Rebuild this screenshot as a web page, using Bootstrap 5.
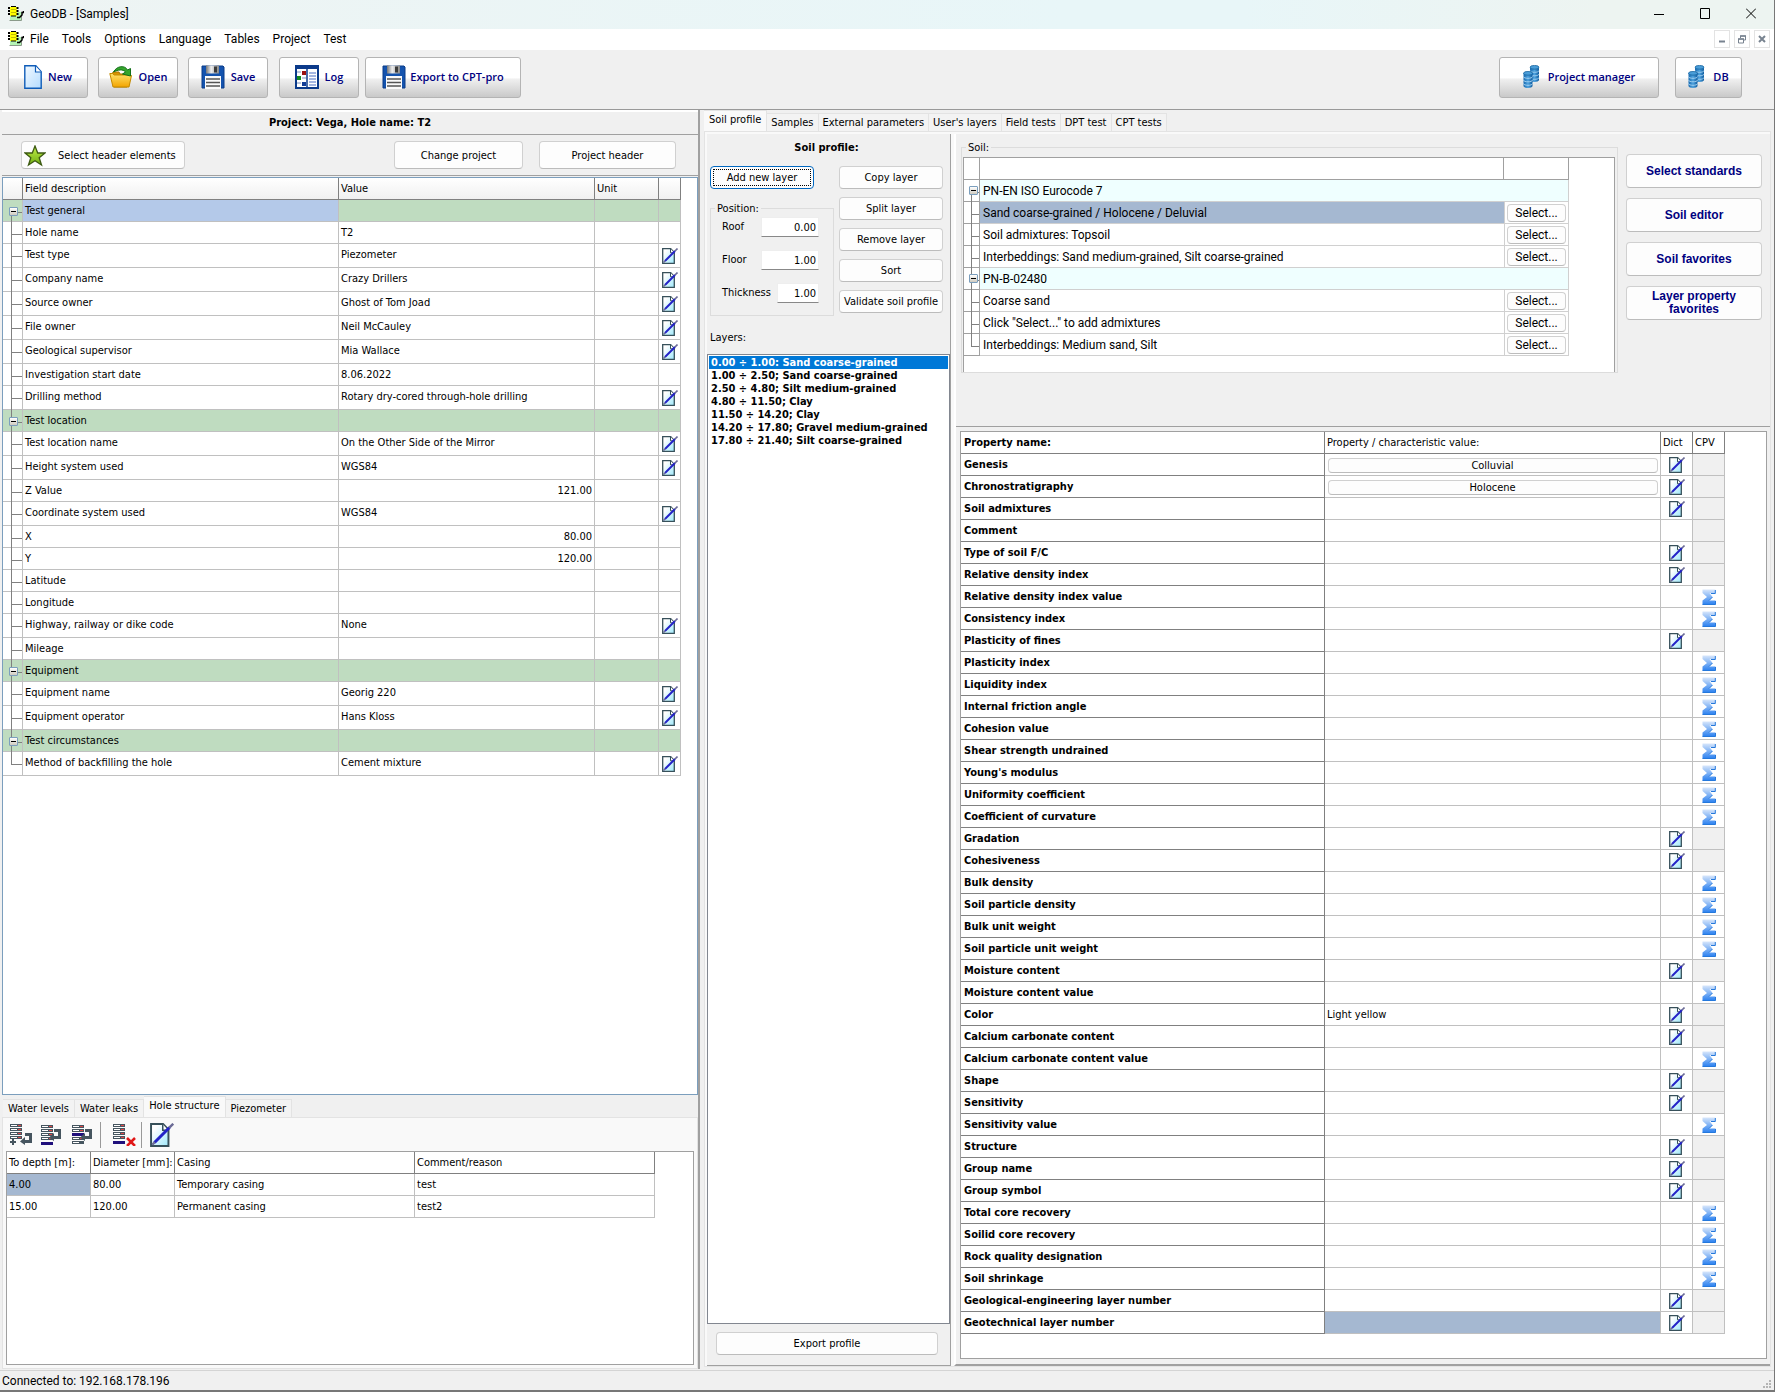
<!DOCTYPE html>
<html lang="en">
<head>
<meta charset="utf-8">
<meta name="viewport" content="width=device-width, initial-scale=1">
<title>GeoDB - [Samples]</title>
<link href="https://cdn.jsdelivr.net/npm/bootstrap@5.3.0/dist/css/bootstrap.min.css" rel="stylesheet">
<style>
:root{--tahoma:"DejaVu Sans Condensed","Liberation Sans",sans-serif;--segoe:Roboto,"Open Sans",sans-serif;--face:#f0f0f0;--sel:#a5b8d1}
body{font-family:var(--tahoma);font-size:11px;line-height:14px;color:#000;background:var(--face)}
.app-window{height:100vh;min-height:1392px;border-right:1px solid #777;border-bottom:2px solid #777}
.segoe{font-family:var(--segoe);font-size:12px;line-height:16px}
.title-strip{height:29px;padding:0 0 2px 8px;gap:6px;background:linear-gradient(90deg,#eef4f3,#e8f6f8 60%,#e8f6f8 70%,#edf4f1 90%)}
.win-btn{width:46px;height:27px;border:0;background:none;padding:0;display:flex;align-items:center;justify-content:center}
.menu-strip{height:20px;background:#fff;padding-left:8px;gap:6px}
.menu-links{gap:13px}
.menu-strip a{color:#000;text-decoration:none}
.mdi-btn{width:16px;height:18px;border:1px solid #e3e3e3;background:#fff;padding:0;display:flex;align-items:center;justify-content:center}
.tool-strip{height:61px;border-top:1px solid #fff;border-bottom:1px solid #999;padding:7px 32px 0 8px;gap:10px}
.log-tools{gap:6px;padding-left:1px}
.tool-btn{height:41px;width:80px;border:1px solid #b4b4b4;border-radius:3px;background:linear-gradient(#fff 50%,#efefef 55%,#c9c9c9);color:#000080;font:600 11px/16px "Open Sans","Noto Sans",sans-serif;display:flex;align-items:center;justify-content:center;gap:6px;padding:0 0 2px}
.btn-exp{width:156px;gap:4px}.btn-pm{width:160px;gap:8px}.btn-db{width:67px;gap:8px}
.plain-btn{border:1px solid #d0d0d0;border-bottom-color:#bcbcbc;border-radius:4px;background:#fdfdfd;color:#000;font:inherit;padding:0;height:23px}
.left-pane{width:700px;border-right:2px solid #a0a0a0;flex:none;padding-left:2px}
.project-name{height:25px;border-top:2px solid #fff;border-bottom:1px solid #a0a0a0;font-weight:700;text-align:center;line-height:22px}
.header-bar{height:41px;border-bottom:1px solid #a0a0a0;padding:6px 22px 0 19px}
.header-bar .plain-btn{height:28px;padding-top:1px}
.w-sel{width:164px;padding-left:2px!important;gap:12px}.w-chg{width:129px}.w-hdr{width:137px}
.fields-box{border:1px solid #7b9ebd;background:#fff;margin-top:1px}
.gridt{border-collapse:separate;border-spacing:0;table-layout:fixed;width:0}
.gridt th,.gridt td{height:22px;padding:4px 2px 2px;border-right:1px solid #c0c0c0;border-bottom:1px solid #c0c0c0;font-weight:400;line-height:14px;vertical-align:top;white-space:nowrap;overflow:hidden}
.gridt th{border-color:#808080}
.gridt tr.tall>td{height:24px}
.gridt .ico{padding:0;text-align:center;vertical-align:middle;line-height:0}
.fields th{background:linear-gradient(#fff,#f0f0f0)}
.grp td{background:#bfdcc0}
.grp td.picked{background:#b4c9e9}
.gridt td.tree{position:relative;padding:0;overflow:visible}
.tree::before{content:"";position:absolute;left:8px;top:0;bottom:-1px;border-left:1px solid #808080}
.tree::after{content:"";position:absolute;left:8px;right:0;top:12px;border-top:1px solid #808080}
.tree.t-first::before{top:12px}
.tree.t-last::before{bottom:auto;height:12px}
.tree button{position:absolute;z-index:1;left:6px;top:7px;width:9px;height:9px;border:1px solid #7b9ebd;border-radius:1px;background:linear-gradient(#fff,#cfcabf);padding:0}
.tree button::after{content:"";position:absolute;left:1px;right:1px;top:3px;border-top:1px solid #000}
.icon-btn{border:0;background:none;padding:0;line-height:0;vertical-align:middle}
.tab-strip{display:flex;align-items:flex-end;padding-left:1px}
.tab-strip button{height:18px;border:1px solid #e3e3e3;border-left-width:0;border-bottom:0;background:#f3f3f3;color:#000;font:inherit;padding:0 4px;white-space:nowrap}
.tab-strip button.on{height:21px;background:#f9f9f9;padding:0 5px 3px}
.low-tabs{padding-top:1px}
.low-tabs button{padding:1px 5px 0}
.low-tabs button.on{padding:0 5px 2px}
.tab-page{border:1px solid #e3e3e3;background:#f9f9f9}
.low-page{padding:0 3px 3px}
.row-tools{height:33px;padding-left:4px}
.casing-box{height:214px}
.sep-v{width:1px;height:26px;background:#999}
.ring-box{border:1px solid #a0a0a0;background:#fff}
.sel-cell{background:var(--sel)}
.right-pane{min-width:0;padding:0 3px 2px 4px}
.main-page{padding:2px 0 0 2px}
.profile-col{width:244px;flex:none;background:var(--face);border-right:1px solid #a0a0a0;border-bottom:1px solid #a0a0a0}
.profile-top{height:220px;padding:7px 7px 0 3px}
.profile-tools{padding-top:11px}
.btn-stack{gap:8px}
.btn-104{width:104px}
.focused{border-color:#0067c0;outline:1px dotted #000;outline-offset:-4px}
.boxed{border:1px solid #dcdcdc;position:relative}
.boxed>legend{position:absolute;top:-8px;left:4px;width:auto;float:none;margin:0;padding:0 2px;font-family:var(--tahoma);font-size:11px;line-height:14px;background:var(--face)}
.pos-box{width:124px;height:108px;margin-top:19px;padding:8px 14px 0 11px}
.pos-box>legend{top:-7px}
.pos-box>div{height:33px}
.pos-box label{padding-top:3px}
.num-in{width:58px;height:20px;border:1px solid #eee;border-bottom:1px solid #888;background:#fff;font:inherit;text-align:right;padding:0 2px}
.num-short{width:42px}
.list-title{padding-top:15px}
.layer-list{list-style:none;margin:0;padding:1px;border:1px solid #828790;background:#fff;font-weight:700;line-height:13px}
.layer-list li{padding-left:2px;height:13px;white-space:nowrap}
.layer-list li.on{background:#0078d7;color:#fff}
.export-row{padding:8px 12px 10px 9px}
.detail-col{min-width:0;background:var(--face);border-left:2px solid #fff;margin-left:3px;border-bottom:2px solid #a0a0a0}
.soil-zone{height:293px;border-bottom:1px solid #a0a0a0;padding:13px 8px 0 5px}
.soil-box{height:226px;padding:9px 2px 0 1px}
.soil-box>legend{top:-7px}
.soil-grid{height:215px;border:1px solid #a0a0a0;border-bottom:0;background:#fff}
.soil-grid .gridt th,.soil-grid .gridt td{line-height:16px;border-color:#d0d0d0;padding:3px 3px 2px}
.soil-grid .gridt .tree,.soil-grid .gridt th{border-color:#a0a0a0}
.soil-grid .gridt .tree{padding:0}
.soil-grid .gridt td.pick{padding:2px 2px 1px;border-left:1px solid #d0d0d0}
.soil-grid .plain-btn{height:18px;width:100%;line-height:14px;display:block}
.soil-grid .tree button{left:5px;top:6px}
.soil-grid .tree::before,.soil-grid .tree::after{left:7px}
.aqua td:not(.tree){background:#efffff}
.side-stack{gap:10px;padding-top:7px}
.side-btn{font:700 12px/13px "Liberation Sans",Arial,sans-serif;color:#000080;width:136px;height:34px}
.prop-box{margin:4px 3px 5px 4px}
.props .pname{font-weight:700;border-color:#808080;padding-left:3px}
.props .off{background:#f0f0f0}
.props .plain-btn{display:block;width:330px;height:15px;line-height:13px;margin:0 auto}
.status-strip{height:20px;border-top:1px solid #d4d4d4;padding:1px 2px;margin-top:1px}
</style>
</head>
<body>
<svg width="0" height="0" class="position-absolute" aria-hidden="true">
<defs>
<linearGradient id="gp" x1="0" y1="0" x2="1" y2="1"><stop offset=".2" stop-color="#fff"/><stop offset="1" stop-color="#9fe8fb"/></linearGradient>
<linearGradient id="gs" x1="0" y1="0" x2="0" y2="1"><stop offset="0" stop-color="#d7e6fb"/><stop offset="1" stop-color="#2a80f0"/></linearGradient>
<linearGradient id="gn" x1="0" y1="0" x2="1" y2="1"><stop offset="0" stop-color="#f2f9ff"/><stop offset="1" stop-color="#b4dcff"/></linearGradient>
<linearGradient id="gf" x1="0" y1="0" x2="0" y2="1"><stop offset="0" stop-color="#ffe36b"/><stop offset="1" stop-color="#f3a400"/></linearGradient>
<linearGradient id="gm" x1="0" y1="0" x2="1" y2="0"><stop offset="0" stop-color="#777"/><stop offset=".4" stop-color="#eee"/><stop offset="1" stop-color="#888"/></linearGradient>
<linearGradient id="gd" x1="0" y1="0" x2="1" y2="0"><stop offset="0" stop-color="#1668ae"/><stop offset=".5" stop-color="#4ea2de"/><stop offset="1" stop-color="#0f5c9f"/></linearGradient>
<linearGradient id="gg" x1="0" y1="0" x2="0" y2="1"><stop offset="0" stop-color="#c4f04a"/><stop offset="1" stop-color="#6fae12"/></linearGradient>
<symbol id="edit" viewBox="0 0 16 16"><path d="M.7.7h8l3.600 3.800v10.800H.7z" fill="url(#gp)" stroke="#37505a" stroke-width="1.300"/><path d="M8.500.8v4h3.600" fill="#fff" stroke="#37505a"/><path d="M3 13 13 3" stroke="#2322c8" stroke-width="2"/><path d="M1.500 14.500 3.200 12.800M12.700 3.300 15.500.5" stroke="#6b6b96" stroke-width="1.600"/></symbol>
<symbol id="sum" viewBox="0 0 14 16"><path d="M.5.5h12.800v4h-3.800L7.500 4l3 4-3.500 3.600h6.500v4H.5v-4L5 8 .5 4z" fill="url(#gs)"/><path d="M13.300 1v3.500H9M10.500 8 7 11.600M13.500 12v3.500H.5" stroke="#2478dc" fill="none"/></symbol>
<symbol id="app" viewBox="0 0 16 16"><path d="M2 6h11v9H2z" fill="#b4f4b4"/><path d="M1.500 14.500h12V10" stroke="#8a9a8a" fill="none"/><path d="M2 1h7v9H2z" fill="#ff0"/><path d="M3 .5h5M3 10h5" stroke="#000" stroke-width="1"/><path d="M1 1v9M9.500 1v9" stroke="#000" stroke-dasharray="2 1" stroke-width="2"/><path d="M3 3.500h5M3 6.500h5" stroke="#a8a000" stroke-width=".7"/><path d="M9 11.500h2.500L14 9V6.500h1.500V5" stroke="#000" stroke-width="1.500" fill="none"/></symbol>
<symbol id="page" viewBox="0 0 18 24"><path d="M.8.8h11l5.400 6v16.400H.8z" fill="url(#gn)" stroke="#0f5cb8" stroke-width="1.400"/><path d="M11.500 1v6h5.500" fill="#fff" stroke="#0f5cb8" stroke-width="1.200"/></symbol>
<symbol id="folder" viewBox="0 0 24 22"><path d="m3 9 1-3h6l1 2h9v10l-2 3H5z" fill="#d89400" stroke="#a87400"/><path d="M.8 7.500h3L5 9h15l2.500.5L20 21H4z" fill="url(#gf)" stroke="#c48a00"/><path d="M4.500 6C8-.5 16-1 18.500 4L21.500 2.500v7.500l-8-2 3-2C14 3 9 3.500 4.500 6z" fill="#35a62c" stroke="#13701a"/></symbol>
<symbol id="disk" viewBox="0 0 24 24"><path d="M1 1h21l1 1v21H1z" fill="#1453ae" stroke="#0b3c88"/><path d="M5 .5h13v8H5z" fill="url(#gm)"/><path d="M13 1.500h3v6h-3z" fill="#3b3b3b"/><path d="M4 11h16v13H4z" fill="#fafafa"/><path d="M5 14h14M5 17.500h14M5 21h14" stroke="#555" stroke-width="1.500"/></symbol>
<symbol id="logi" viewBox="0 0 24 24"><path d="M1 1h22v22H1z" fill="#fff" stroke="#0b3a8a" stroke-width="2"/><path d="M1 0h22v4H1z" fill="#0b3a8a"/><path d="M12 4v19" stroke="#0b3a8a" stroke-width="1.500"/><path d="M14 8h7M14 11h7M14 14h7M14 17h7M14 20h7" stroke="#4a6fc4"/><path d="M7 6h4v4H7z" fill="#9c1010"/><path d="M2 11h4v4H2z" fill="#128a20"/><path d="M7 17h4v4H7z" fill="#123c96"/><path d="M2 7h4M7 13h4M2 18h4" stroke="#bcc8dd" stroke-width="2"/></symbol>
<symbol id="cyl" viewBox="0 0 10 17"><path d="M.5 2v13c0 2.500 9 2.500 9 0V2z" fill="url(#gd)"/><ellipse cx="5" cy="2.300" rx="4.500" ry="1.900" fill="#4a9dd8" stroke="#15639f" stroke-width=".8"/><path d="M.5 5.500c0 2.400 9 2.400 9 0M.5 9c0 2.400 9 2.400 9 0M.5 12.500c0 2.400 9 2.400 9 0" stroke="#a9d5f3" fill="none" stroke-width=".9"/></symbol>
<symbol id="db" viewBox="0 0 17 24"><use href="#cyl" x="6.500" width="10" height="17"/><use href="#cyl" y="6" width="10" height="17"/></symbol>
<symbol id="rows" viewBox="0 0 12 15"><path d="M0 1.500h12M0 5.500h12M0 9.500h12M0 13.500h12" stroke="#46555f" stroke-width="3"/><path d="M1 1.500h6M1 5.500h6M1 9.500h6M1 13.500h6" stroke="#fff"/><path d="M8 1.500h3M8 5.500h3M8 9.500h3M8 13.500h3" stroke="#e04848"/></symbol>
<symbol id="arr" viewBox="0 0 12 12"><path d="M5 1.500h5.500v7H4" fill="none" stroke="#46555f" stroke-width="3"/><path d="M5 4v8L0 8.500z" fill="#46555f"/></symbol>
</defs></svg>

<div class="app-window d-flex flex-column">
  <header>
    <div class="title-strip d-flex align-items-center segoe">
      <svg width="16" height="16"><use href="#app"/></svg><span class="me-auto">GeoDB - [Samples]</span>
      <div class="d-flex">
      <button class="win-btn" aria-label="Minimize"><svg width="10" height="10"><path d="M0 5.500h10" stroke="#000"/></svg></button>
      <button class="win-btn" aria-label="Maximize"><svg width="10" height="11"><path d="M.5.5h9v10h-9z" fill="none" stroke="#000"/></svg></button>
      <button class="win-btn" aria-label="Close"><svg width="10" height="11"><path d="m0 .5 10 10m0-10-10 10" stroke="#000"/></svg></button>
      </div>
    </div>
    <nav class="menu-strip d-flex align-items-center segoe">
      <svg width="16" height="16"><use href="#app"/></svg>
      <div class="d-flex me-auto menu-links"><a href="#">File</a><a href="#">Tools</a><a href="#">Options</a><a href="#">Language</a><a href="#">Tables</a><a href="#">Project</a><a href="#">Test</a></div>
      <div class="d-flex gap-1 pe-1">
      <button class="mdi-btn" aria-label="Minimize child"><svg width="8" height="8"><path d="M1 6.500h6" stroke="#788390" stroke-width="2"/></svg></button>
      <button class="mdi-btn" aria-label="Restore child"><svg width="8" height="9"><path d="M2.500 3V1h5v4H6M.5 4h5v4h-5z" fill="none" stroke="#788390"/><path d="M2 1h6M0 4h6" stroke="#788390" stroke-width="1.500"/></svg></button>
      <button class="mdi-btn" aria-label="Close child"><svg width="8" height="8"><path d="m1 1 6 6m0-6-6 6" stroke="#788390" stroke-width="2"/></svg></button>
      </div>
    </nav>
    <div class="tool-strip d-flex">
      <button class="tool-btn"><svg width="18" height="24"><use href="#page"/></svg>New</button>
      <button class="tool-btn"><svg width="24" height="22"><use href="#folder"/></svg>Open</button>
      <button class="tool-btn"><svg width="24" height="24"><use href="#disk"/></svg>Save</button>
      <div class="d-flex log-tools"><button class="tool-btn"><svg width="24" height="24"><use href="#logi"/></svg>Log</button>
      <button class="tool-btn btn-exp"><svg width="24" height="24"><use href="#disk"/></svg>Export to CPT-pro</button></div>
      <div class="d-flex gap-3 ms-auto"><button class="tool-btn btn-pm"><svg width="17" height="24"><use href="#db"/></svg>Project manager</button>
      <button class="tool-btn btn-db"><svg width="17" height="24"><use href="#db"/></svg>DB</button></div>
    </div>
  </header>

  <main class="d-flex flex-grow-1">
    <section class="left-pane d-flex flex-column">
      <div class="project-name">Project: Vega, Hole name: T2</div>
      <div class="header-bar d-flex align-items-start">
        <button class="plain-btn w-sel d-flex align-items-center me-auto"><svg width="22" height="22" viewBox="0 0 22 22"><path d="m11 1 2.700 7H21l-5.800 4.800L17.500 20 11 15.700 4.500 20l2.300-7.200L1 8h7.300z" fill="url(#gg)" stroke="#3d5a12" stroke-width="1.300"/></svg>Select header elements</button>
        <button class="plain-btn w-chg me-3">Change project</button>
        <button class="plain-btn w-hdr">Project header</button>
      </div>
      <div class="fields-box flex-grow-1">
        <table class="gridt fields"><colgroup><col style="width:20px"><col style="width:316px"><col style="width:256px"><col style="width:64px"><col style="width:22px"></colgroup>
          <thead><tr><th></th><th>Field description</th><th>Value</th><th>Unit</th><th></th></tr></thead><tbody id="fields"></tbody></table>
      </div>
      <div class="tab-strip low-tabs"><button>Water levels</button><button>Water leaks</button><button class="on">Hole structure</button><button>Piezometer</button></div>
      <div class="tab-page low-page">
        <div class="d-flex align-items-center row-tools">
          <button class="icon-btn" aria-label="Append row"><svg width="22" height="22"><use href="#rows" width="12" height="15"/><path d="M0 18h6M3 15v6" stroke="#46555f" stroke-width="2"/><use href="#arr" x="10" y="9" width="12" height="12"/></svg></button>
          <button class="icon-btn ms-2" aria-label="Insert row below"><svg width="22" height="22"><use href="#rows" y="1" x="1" width="12" height="15"/><path d="M1 19.500h12" stroke="#20107c" stroke-width="3"/><use href="#arr" x="9" y="5" width="12" height="12"/></svg></button>
          <button class="icon-btn ms-2" aria-label="Insert row above"><svg width="22" height="22"><use href="#rows" y="1" x="2" width="12" height="15"/><path d="M2 10.500h12" stroke="#20107c" stroke-width="3"/><path d="M2 18.500h12" stroke="#46555f" stroke-width="3"/><path d="M3 18.500h6" stroke="#fff"/><use href="#arr" x="10" y="5" width="12" height="12"/></svg></button>
          <span class="sep-v ms-2 me-2"></span>
          <button class="icon-btn ps-1" aria-label="Delete row"><svg width="24" height="22"><use href="#rows" width="12" height="15"/><path d="M0 18.500h12" stroke="#20107c" stroke-width="3"/><path d="m14 14 8 8m0-8-8 8" stroke="#e01818" stroke-width="2.500"/></svg></button>
          <span class="sep-v ms-1 me-2"></span>
          <button class="icon-btn" aria-label="Edit"><svg width="24" height="24"><use href="#edit"/></svg></button>
        </div>
        <div class="ring-box casing-box">
          <table class="gridt"><colgroup><col style="width:84px"><col style="width:84px"><col style="width:240px"><col style="width:240px"></colgroup>
            <thead><tr><th>To depth [m]:</th><th>Diameter [mm]:</th><th>Casing</th><th>Comment/reason</th></tr></thead>
            <tbody><tr><td class="sel-cell">4.00</td><td>80.00</td><td>Temporary casing</td><td>test</td></tr><tr><td>15.00</td><td>120.00</td><td>Permanent casing</td><td>test2</td></tr></tbody></table>
        </div>
      </div>
    </section>

    <section class="right-pane d-flex flex-column flex-grow-1">
      <div class="tab-strip p-0"><button class="on">Soil profile</button><button>Samples</button><button>External parameters</button><button>User's layers</button><button>Field tests</button><button>DPT test</button><button>CPT tests</button></div>
      <div class="tab-page main-page d-flex flex-grow-1">
        <div class="profile-col d-flex flex-column">
          <div class="profile-top">
            <div class="text-center fw-bold">Soil profile:</div>
            <div class="d-flex justify-content-between profile-tools">
              <div>
                <button class="plain-btn btn-104 focused d-block">Add new layer</button>
                <fieldset class="boxed pos-box"><legend>Position:</legend>
                  <div class="d-flex justify-content-between align-items-start"><label for="roof">Roof</label><input class="num-in" id="roof" value="0.00"></div>
                  <div class="d-flex justify-content-between align-items-start"><label for="floor">Floor</label><input class="num-in" id="floor" value="1.00"></div>
                  <div class="d-flex justify-content-between align-items-start"><label for="thick">Thickness</label><input class="num-in num-short" id="thick" value="1.00"></div>
                </fieldset>
                <div id="lay" class="list-title">Layers:</div>
              </div>
              <div class="d-flex flex-column btn-stack"><button class="plain-btn btn-104">Copy layer</button><button class="plain-btn btn-104">Split layer</button><button class="plain-btn btn-104">Remove layer</button><button class="plain-btn btn-104">Sort</button><button class="plain-btn btn-104">Validate soil profile</button></div>
            </div>
          </div>
          <ul class="layer-list flex-grow-1" aria-labelledby="lay"><li class="on">0.00 ÷ 1.00: Sand coarse-grained</li><li>1.00 ÷ 2.50; Sand coarse-grained</li><li>2.50 ÷ 4.80; Silt medium-grained</li><li>4.80 ÷ 11.50; Clay</li><li>11.50 ÷ 14.20; Clay</li><li>14.20 ÷ 17.80; Gravel medium-grained</li><li>17.80 ÷ 21.40; Silt coarse-grained</li></ul>
          <div class="export-row"><button class="plain-btn w-100 d-block">Export profile</button></div>
        </div>
        <div class="detail-col flex-grow-1 d-flex flex-column">
          <div class="soil-zone d-flex align-items-start">
            <fieldset class="boxed soil-box flex-grow-1 segoe"><legend>Soil:</legend>
              <div class="soil-grid">
                <table class="gridt"><colgroup><col style="width:16px"><col style="width:524px"><col style="width:65px"></colgroup>
                  <thead><tr><th></th><th></th><th></th></tr></thead><tbody id="soil"></tbody></table>
              </div>
            </fieldset>
            <div class="d-flex flex-column ms-2 side-stack">
              <button class="plain-btn side-btn">Select standards</button><button class="plain-btn side-btn">Soil editor</button><button class="plain-btn side-btn">Soil favorites</button><button class="plain-btn side-btn">Layer property<br>favorites</button>
            </div>
          </div>
          <div class="prop-box ring-box flex-grow-1">
            <table class="gridt props"><colgroup><col style="width:364px"><col style="width:336px"><col style="width:32px"><col style="width:32px"></colgroup>
              <thead><tr><th class="pname">Property name:</th><th>Property / characteristic value:</th><th>Dict</th><th>CPV</th></tr></thead><tbody id="props"></tbody></table>
          </div>
        </div>
      </div>
    </section>
  </main>
  <footer class="status-strip segoe d-flex justify-content-between align-items-end"><span>Connected to: 192.168.178.196</span>
    <svg width="9" height="9"><path d="M6 0h2v2H6zM6 3h2v2H6zM3 3h2v2H3zM6 6h2v2H6zM3 6h2v2H3zM0 6h2v2H0z" fill="#b4b4b4"/></svg></footer>
</div>

<script>
const edit = '<button class="icon-btn" aria-label="Edit"><svg width="16" height="16"><use href="#edit"/></svg></button>';
const sum = '<button class="icon-btn" aria-label="Statistics"><svg width="14" height="16"><use href="#sum"/></svg></button>';
const minus = '<button aria-label="Collapse"></button>';
// g: group, e: editable from dictionary, n: numeric value, empty: plain text
const fields = [['g','Test general'],['','Hole name','T2'],['e','Test type','Piezometer'],['e','Company name','Crazy Drillers'],['e','Source owner','Ghost of Tom Joad'],['e','File owner','Neil McCauley'],['e','Geological supervisor','Mia Wallace'],['','Investigation start date','8.06.2022'],['e','Drilling method','Rotary dry-cored through-hole drilling'],
['g','Test location'],['e','Test location name','On the Other Side of the Mirror'],['e','Height system used','WGS84'],['n','Z Value','121.00'],['e','Coordinate system used','WGS84'],['n','X','80.00'],['n','Y','120.00'],['','Latitude',''],['','Longitude',''],['e','Highway, railway or dike code','None'],['','Mileage',''],
['g','Equipment'],['e','Equipment name','Georig 220'],['e','Equipment operator','Hans Kloss'],['g','Test circumstances'],['e','Method of backfilling the hole','Cement mixture']];
const edge = (i, n) => i === 0 ? ' t-first' : i === n - 1 ? ' t-last' : '';
document.getElementById('fields').innerHTML = fields.map(([k, name, val = ''], i) =>
  `<tr class="${k === 'g' ? 'grp' : k === 'e' ? 'tall' : ''}"><td class="tree${edge(i, fields.length)}">${k === 'g' ? minus : ''}</td><td class="${i ? '' : 'picked'}">${name}</td><td class="${k === 'n' ? 'text-end' : ''}">${val}</td><td></td><td class="ico">${k === 'e' ? edit : ''}</td></tr>`).join('');
const soil = [['g','PN-EN ISO Eurocode 7'],['s','Sand coarse-grained / Holocene / Deluvial'],['','Soil admixtures: Topsoil'],['','Interbeddings: Sand medium-grained, Silt coarse-grained'],['g','PN-B-02480'],['','Coarse sand'],['','Click "Select..." to add admixtures'],['','Interbeddings: Medium sand, Silt']];
document.getElementById('soil').innerHTML = soil.map(([k, t], i) =>
  `<tr class="${k === 'g' ? 'aqua' : ''}"><td class="tree${edge(i, soil.length)}">${k === 'g' ? minus : ''}</td>` + (k === 'g' ? `<td colspan="2">${t}</td>` : `<td class="border-end-0${k === 's' ? ' sel-cell' : ''}">${t}</td><td class="pick"><button class="plain-btn">Select...</button></td>`) + '</tr>').join('');
// d: dictionary value, s: statistical value
const props = [['d','Genesis','*Colluvial'],['d','Chronostratigraphy','*Holocene'],['d','Soil admixtures'],['','Comment'],['d','Type of soil F/C'],['d','Relative density index'],['s','Relative density index value'],['s','Consistency index'],['d','Plasticity of fines'],['s','Plasticity index'],['s','Liquidity index'],['s','Internal friction angle'],['s','Cohesion value'],['s','Shear strength undrained'],['s',"Young's modulus"],['s','Uniformity coefficient'],['s','Coefficient of curvature'],['d','Gradation'],['d','Cohesiveness'],['s','Bulk density'],['s','Soil particle density'],['s','Bulk unit weight'],['s','Soil particle unit weight'],['d','Moisture content'],['s','Moisture content value'],['d','Color','Light yellow'],['d','Calcium carbonate content'],['s','Calcium carbonate content value'],['d','Shape'],['d','Sensitivity'],['s','Sensitivity value'],['d','Structure'],['d','Group name'],['d','Group symbol'],['s','Total core recovery'],['s','Soilid core recovery'],['s','Rock quality designation'],['s','Soil shrinkage'],['d','Geological-engineering layer number'],['d','Geotechnical layer number']];
document.getElementById('props').innerHTML = props.map(([k, name, v = ''], i) =>
  `<tr><td class="pname">${name}</td><td class="${i === props.length - 1 ? 'sel-cell' : ''}">${v[0] === '*' ? `<button class="plain-btn">${v.slice(1)}</button>` : v}</td><td class="ico">${k === 'd' ? edit : ''}</td><td class="ico${k === 's' ? '' : ' off'}">${k === 's' ? sum : ''}</td></tr>`).join('');
</script>
<script src="https://cdn.jsdelivr.net/npm/bootstrap@5.3.0/dist/js/bootstrap.bundle.min.js"></script>
</body>
</html>
